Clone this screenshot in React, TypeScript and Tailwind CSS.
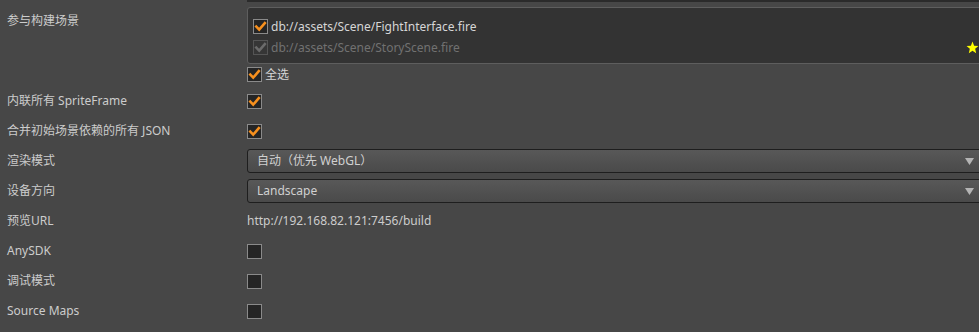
const font = { fontFamily: '"Noto Sans", "Noto Sans CJK SC", sans-serif' };

function Check({ checked = false, disabled = false }: { checked?: boolean; disabled?: boolean }) {
    return (
        <div
            className={`flex h-[15px] w-[15px] flex-none items-center justify-center border ${
                disabled ? "border-[#555555] bg-[#363636]" : "border-[#8a8a8a] bg-[#252525]"
            }`}
        >
            {checked && (
                <svg width="13" height="13" viewBox="0 0 13 13">
                    <path
                        d="M2.3 6.6 L5.2 9.6 L10.8 3.2"
                        fill="none"
                        stroke={disabled ? "#6b6b6b" : "#f7901e"}
                        strokeWidth="2.6"
                        strokeLinecap="square"
                    />
                </svg>
            )}
        </div>
    );
}

function Row({ label, children }: { label: React.ReactNode; children: React.ReactNode }) {
    return (
        <div className="flex h-[30px] items-center">
            <div className="w-[247px] flex-none pl-[7px] text-[#cccccc]">{label}</div>
            <div className="flex w-[736px] flex-none items-center">{children}</div>
        </div>
    );
}

function Select({ value }: { value: string }) {
    return (
        <div className="flex h-[24px] w-full items-center justify-between rounded-[3px] border border-[#1e1e1e] bg-gradient-to-b from-[#585858] to-[#4a4a4a] pl-[9px] pr-[8px] text-[#d0d0d0]">
            <span>{value}</span>
            <svg width="9" height="7" viewBox="0 0 9 7">
                <path d="M0 0 H9 L4.5 7 Z" fill="#b4b4b4" />
            </svg>
        </div>
    );
}

export default function App() {
    return (
        <div
            className="h-[332px] w-[979px] overflow-hidden bg-[#474747] text-[12px] leading-[16px]"
            style={font}
        >
            <div className="ml-[247px] h-[2px] bg-[#2b2b2b]" />
            <div className="flex">
                <div className="w-[247px] flex-none pl-[7px] pt-[11px] text-[#cccccc]">参与构建场景</div>
                <div className="flex w-[745px] flex-none flex-col pt-[5px]">
                    <div className="flex h-[57px] flex-col gap-[6px] rounded-[3px] border border-[#5e5e5e] bg-[#333333] pl-[5px] pr-[12px] pt-[11px]">
                        <div className="flex h-[15px] items-center gap-[3px]">
                            <Check checked />
                            <span className="text-[#d6d6d6]">db://assets/Scene/FightInterface.fire</span>
                        </div>
                        <div className="flex h-[15px] items-center gap-[3px]">
                            <Check checked disabled />
                            <span className="text-[#717171]">db://assets/Scene/StoryScene.fire</span>
                            <svg className="ml-auto" width="13" height="13" viewBox="0 0 24 24">
                                <path
                                    d="M12 1 L15 8.6 L23 9.2 L16.9 14.4 L18.8 22.4 L12 18 L5.2 22.4 L7.1 14.4 L1 9.2 L9 8.6 Z"
                                    fill="#ffff00"
                                />
                            </svg>
                        </div>
                    </div>
                    <div className="mt-[3px] flex h-[15px] items-center gap-[3px]">
                        <Check checked />
                        <span className="text-[#d6d6d6]">全选</span>
                    </div>
                </div>
            </div>
            <div className="mt-[4px] flex flex-col">
                <Row label="内联所有 SpriteFrame">
                    <Check checked />
                </Row>
                <Row label="合并初始场景依赖的所有 JSON">
                    <Check checked />
                </Row>
                <Row label="渲染模式">
                    <Select value="自动（优先 WebGL）" />
                </Row>
                <Row label="设备方向">
                    <Select value="Landscape" />
                </Row>
                <Row label="预览URL">
                    <span className="text-[#cccccc]">http://192.168.82.121:7456/build</span>
                </Row>
                <Row label="AnySDK">
                    <Check />
                </Row>
                <Row label="调试模式">
                    <Check />
                </Row>
                <Row label="Source Maps">
                    <Check />
                </Row>
            </div>
        </div>
    );
}
